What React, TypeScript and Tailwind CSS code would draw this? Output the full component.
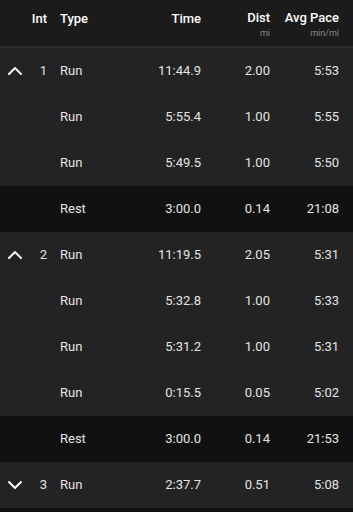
import React from "react";
import { ChevronUp, ChevronDown } from "lucide-react";

type Row = {
  lap?: number;
  open?: boolean;
  type: string;
  time: string;
  dist: string;
  pace: string;
  rest?: boolean;
};

const rows: Row[] = [
  { lap: 1, open: true, type: "Run", time: "11:44.9", dist: "2.00", pace: "5:53" },
  { type: "Run", time: "5:55.4", dist: "1.00", pace: "5:55" },
  { type: "Run", time: "5:49.5", dist: "1.00", pace: "5:50" },
  { type: "Rest", time: "3:00.0", dist: "0.14", pace: "21:08", rest: true },
  { lap: 2, open: true, type: "Run", time: "11:19.5", dist: "2.05", pace: "5:31" },
  { type: "Run", time: "5:32.8", dist: "1.00", pace: "5:33" },
  { type: "Run", time: "5:31.2", dist: "1.00", pace: "5:31" },
  { type: "Run", time: "0:15.5", dist: "0.05", pace: "5:02" },
  { type: "Rest", time: "3:00.0", dist: "0.14", pace: "21:53", rest: true },
  { lap: 3, open: false, type: "Run", time: "2:37.7", dist: "0.51", pace: "5:08" },
];

export default function App() {
  return (
    <div className="w-[353px] h-[512px] overflow-hidden bg-[#111111] font-['Roboto',sans-serif] text-[13px] text-[#e4e4e4]">
      {/* Header */}
      <div className="flex h-[46px] bg-[#1b1b1b] pr-[14px] pt-[9px] font-medium text-white border-b border-[#161616]">
        <div className="w-[30px]" />
        <div className="w-[17px] text-right">Int</div>
        <div className="flex-1 pl-[13px]">Type</div>
        <div className="w-[80px] text-right">Time</div>
        <div className="w-[69px] text-right leading-none">
          <div className="leading-[17px]">Dist</div>
          <div className="text-[9px] font-normal text-[#8a8a8a] mt-[3px]">mi</div>
        </div>
        <div className="w-[69px] text-right leading-none">
          <div className="leading-[17px]">Avg Pace</div>
          <div className="text-[9px] font-normal text-[#8a8a8a] mt-[3px]">min/mi</div>
        </div>
      </div>
      <div className="h-[2px] bg-[#2a2a2a]" />

      {rows.map((r, i) => (
        <div
          key={i}
          className={`flex items-center h-[46px] pr-[14px] ${r.rest ? "bg-[#111111]" : "bg-[#232323]"}`}
        >
          <div className="w-[30px] flex justify-center">
            {r.lap !== undefined &&
              (r.open ? (
                <ChevronUp size={24} strokeWidth={2} className="text-white" />
              ) : (
                <ChevronDown size={24} strokeWidth={2} className="text-white" />
              ))}
          </div>
          <div className="w-[17px] text-right">{r.lap ?? ""}</div>
          <div className="flex-1 pl-[13px]">{r.type}</div>
          <div className="w-[80px] text-right">{r.time}</div>
          <div className="w-[69px] text-right">{r.dist}</div>
          <div className="w-[69px] text-right">{r.pace}</div>
        </div>
      ))}
    </div>
  );
}
